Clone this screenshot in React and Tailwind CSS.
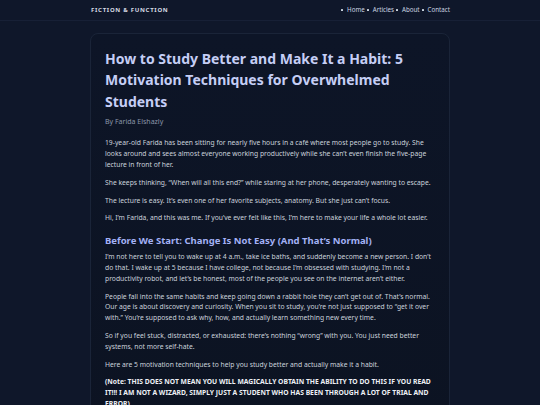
export default function App() {
  const font = { fontFamily: '"Noto Sans", "Open Sans", sans-serif' };
  return (
    <div className="min-h-[405px] h-[405px] overflow-hidden bg-[#0f172a] text-[#cbd5e1]" style={font}>
      <header className="h-[21px] border-b border-[#172036] bg-[#0f172a]">
        <div className="mx-auto w-[360px] h-full flex items-center justify-between pl-[1px]">
          <div className="text-[6px] font-bold tracking-[0.12em] text-[#d5d9e2]">FICTION &amp; FUNCTION</div>
          <ul className="flex items-center text-[6.2px] text-[#cbd5e1]">
            {["Home", "Articles", "About", "Contact"].map((t, i) => (
              <li key={t} className={`flex items-center ${i === 0 ? "" : "ml-[2px]"}`}>
                <span className="mr-[4px] w-[2px] h-[2px] rounded-[0.5px] bg-[#cbd5e1]"></span>
                <span>{t}</span>
              </li>
            ))}
          </ul>
        </div>
      </header>
      <main className="mx-auto w-[360px] pt-[12px]">
        <article className="rounded-t-[8px] border border-[#1a2438] bg-gradient-to-b from-[#0d1527] to-[#0c1322] px-[14px] pt-[14px] pb-[20px] h-[400px]">
          <h1 className="text-[14px] font-bold leading-[21.3px] text-[#c5cef5]">
            How to Study Better and Make It a Habit: 5 Motivation Techniques for Overwhelmed Students
          </h1>
          <p className="mt-[5px] text-[7px] text-[#8b95a8] mb-[11px]">By Farida Elshazly</p>
          <div className="text-[6.75px] leading-[10.8px] text-[#cbd2dc]">
            <p className="mb-[7px]">
              19-year-old Farida has been sitting for nearly five hours in a café where most people go to study. She looks around and sees almost everyone working productively while she can’t even finish the five-page lecture in front of her.
            </p>
            <p className="mb-[7px]">
              She keeps thinking, “When will all this end?” while staring at her phone, desperately wanting to escape.
            </p>
            <p className="mb-[7px]">
              The lecture is easy. It’s even one of her favorite subjects, anatomy. But she just can’t focus.
            </p>
            <p className="mb-[10px]">
              Hi, I’m Farida, and this was me. If you’ve ever felt like this, I’m here to make your life a whole lot easier.
            </p>
            <h2 className="text-[9.5px] font-bold leading-[14px] text-[#a3b1f5] mb-[4px]">
              Before We Start: Change Is Not Easy (And That’s Normal)
            </h2>
            <p className="mb-[7px]">
              I’m not here to tell you to wake up at 4 a.m., take ice baths, and suddenly become a new person. I don’t do that. I wake up at 5 because I have college, not because I’m obsessed with studying. I’m not a productivity robot, and let’s be honest, most of the people you see on the internet aren’t either.
            </p>
            <p className="mb-[7px]">
              People fall into the same habits and keep going down a rabbit hole they can’t get out of. That’s normal. Our age is about discovery and curiosity. When you sit to study, you’re not just supposed to “get it over with.” You’re supposed to ask why, how, and actually learn something new every time.
            </p>
            <p className="mb-[7px]">
              So if you feel stuck, distracted, or exhausted: there’s nothing “wrong” with you. You just need better systems, not more self-hate.
            </p>
            <p className="mb-[7px]">
              Here are 5 motivation techniques to help you study better and actually make it a habit.
            </p>
            <p className="mb-[7px] font-bold text-[#eef1f6]">
              (Note: THIS DOES NOT MEAN YOU WILL MAGICALLY OBTAIN THE ABILITY TO DO THIS IF YOU READ IT!!! I AM NOT A WIZARD, SIMPLY JUST A STUDENT WHO HAS BEEN THROUGH A LOT OF TRIAL AND ERROR)
            </p>
          </div>
        </article>
      </main>
    </div>
  );
}
